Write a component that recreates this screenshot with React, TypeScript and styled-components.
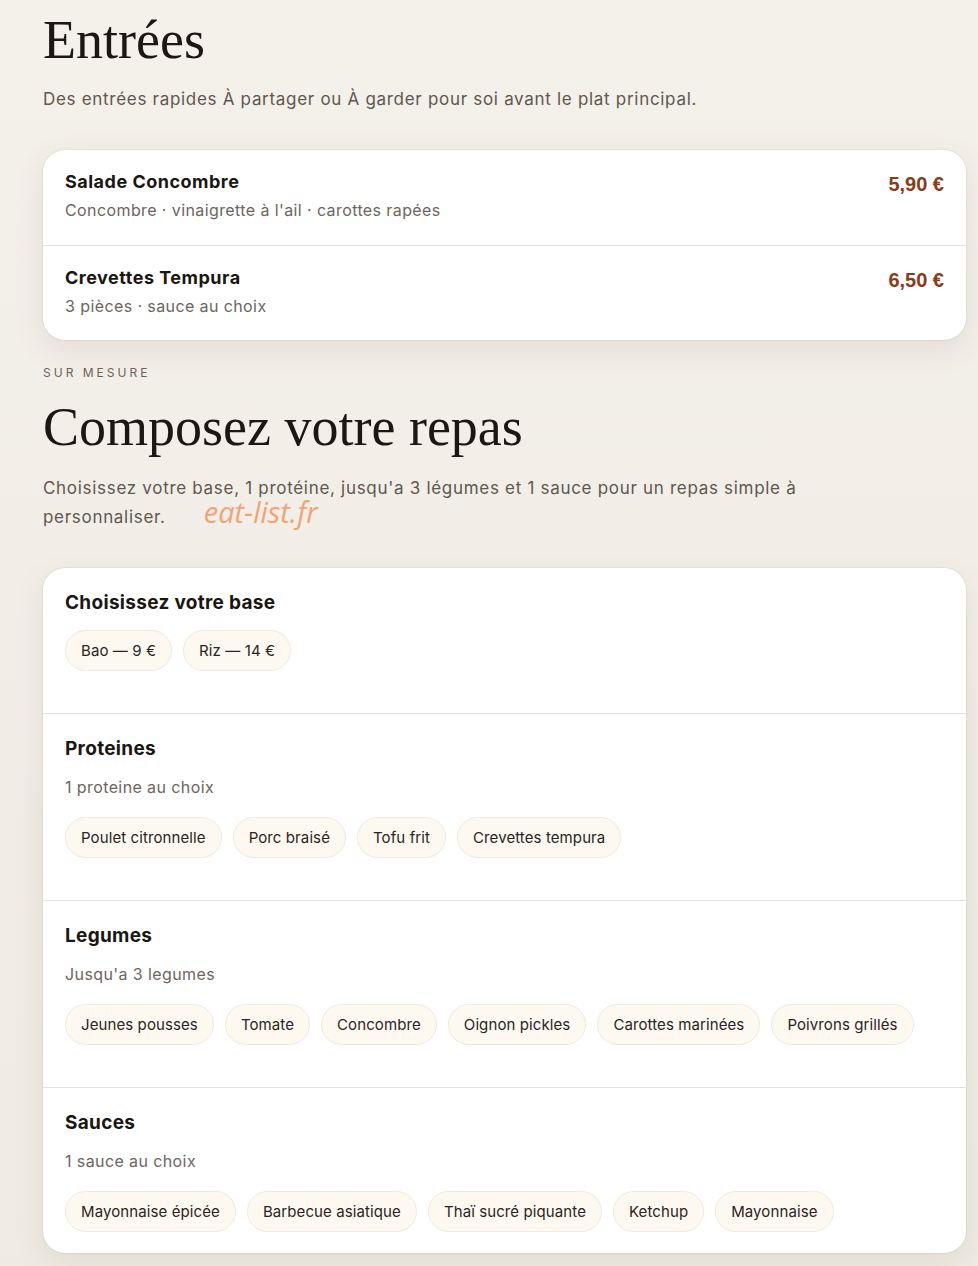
import styled, { createGlobalStyle } from 'styled-components';

const GlobalStyle = createGlobalStyle`
  html, body {
    margin: 0;
    padding: 0;
    background: linear-gradient(180deg, #f4f0ea 0%, #efebe4 100%);
    min-height: 100%;
  }
  body {
    font-family: Inter, "Noto Sans", sans-serif;
    color: #1c1814;
  }
  * { box-sizing: border-box; }
`;

const Page = styled.main`
  width: 923px;
  margin-left: 43px;
  padding-bottom: 40px;
`;

const Title = styled.h1`
  font-family: "Liberation Serif", "DejaVu Serif", serif;
  font-weight: 400;
  font-size: 54px;
  line-height: 1;
  color: #1c1712;
  margin: 0;
`;

const Lead = styled.p`
  font-size: 17px;
  line-height: 29px;
  letter-spacing: 0.7px;
  color: #5f5750;
  margin: 0;
  max-width: 775px;
`;

const Watermark = styled.span`
  font-family: "Open Sans", sans-serif;
  font-style: italic;
  font-size: 29px;
  line-height: 0;
  letter-spacing: 0;
  color: #f2a477;
  margin-left: 38px;
`;

const Card = styled.section`
  background: #fff;
  border-radius: 22px;
  box-shadow: 0 10px 30px rgba(120, 100, 70, 0.12), 0 0 0 1px rgba(120, 100, 70, 0.08);
  overflow: hidden;
`;

const DishRow = styled.div`
  display: flex;
  justify-content: space-between;
  align-items: flex-start;
  padding: 21px 22px 0;
  height: 95px;
  & + & { border-top: 1px solid #e6e1da; }
`;

const DishName = styled.h3`
  margin: 0;
  font-size: 18px;
  font-weight: 700;
  letter-spacing: 0.5px;
  color: #1b1611;
`;

const DishDesc = styled.div`
  font-size: 16px;
  letter-spacing: 0.4px;
  color: #6d655d;
  margin-top: 8px;
`;

const Price = styled.span`
  font-family: "Liberation Sans", Arial, sans-serif;
  font-weight: 700;
  font-size: 20px;
  color: #8a3b17;
  margin-top: 2px;
`;

const Eyebrow = styled.div`
  font-size: 12px;
  letter-spacing: 3px;
  color: #6b6259;
  text-transform: uppercase;
`;

const Section = styled.div`
  padding: 23px 22px 42px;
  & + & { border-top: 1px solid #e6e1da; }
  &:last-child { padding-bottom: 21px; }
`;

const SectionTitle = styled.h3`
  margin: 0;
  font-size: 19px;
  font-weight: 700;
  letter-spacing: 0.3px;
  color: #1b1611;
`;

const Hint = styled.div`
  font-size: 16px;
  letter-spacing: 0.4px;
  color: #6d655d;
  margin-top: 17px;
  padding-bottom: 4px;
`;

const Chips = styled.div`
  display: flex;
  flex-wrap: wrap;
  gap: 11px;
  margin-top: 16px;
`;

const Chip = styled.button`
  height: 41px;
  padding: 0 15px;
  border-radius: 999px;
  border: 1px solid #efe9df;
  background: #fdf9f1;
  font-family: inherit;
  font-size: 15px;
  letter-spacing: 0.1px;
  color: #2a241f;
  cursor: pointer;
`;

const entrees = [
  { name: 'Salade Concombre', desc: "Concombre · vinaigrette à l'ail · carottes rapées", price: '5,90 €' },
  { name: 'Crevettes Tempura', desc: '3 pièces · sauce au choix', price: '6,50 €' },
];

const steps = [
  { title: 'Choisissez votre base', items: ['Bao — 9 €', 'Riz — 14 €'] },
  { title: 'Proteines', hint: '1 proteine au choix', items: ['Poulet citronnelle', 'Porc braisé', 'Tofu frit', 'Crevettes tempura'] },
  { title: 'Legumes', hint: "Jusqu'a 3 legumes", items: ['Jeunes pousses', 'Tomate', 'Concombre', 'Oignon pickles', 'Carottes marinées', 'Poivrons grillés'] },
  { title: 'Sauces', hint: '1 sauce au choix', items: ['Mayonnaise épicée', 'Barbecue asiatique', 'Thaï sucré piquante', 'Ketchup', 'Mayonnaise'] },
];

export default function App() {
  return (
    <>
      <GlobalStyle />
      <Page>
        <Title style={{ paddingTop: 13 }}>Entrées</Title>
        <Lead style={{ marginTop: 18 }}>Des entrées rapides À partager ou À garder pour soi avant le plat principal.</Lead>
        <Card style={{ marginTop: 36 }}>
          {entrees.map(e => (
            <DishRow key={e.name}>
              <div>
                <DishName>{e.name}</DishName>
                <DishDesc>{e.desc}</DishDesc>
              </div>
              <Price>{e.price}</Price>
            </DishRow>
          ))}
        </Card>
        <Eyebrow style={{ marginTop: 25 }}>Sur mesure</Eyebrow>
        <Title style={{ marginTop: 20 }}>Composez votre repas</Title>
        <Lead style={{ marginTop: 20 }}>
          Choisissez votre base, 1 protéine, jusqu'a 3 légumes et 1 sauce pour un repas simple à personnaliser.
          <Watermark>eat-list.fr</Watermark>
        </Lead>
        <Card style={{ marginTop: 36 }}>
          {steps.map(s => (
            <Section key={s.title}>
              <SectionTitle>{s.title}</SectionTitle>
              {s.hint && <Hint>{s.hint}</Hint>}
              <Chips>
                {s.items.map(i => <Chip key={i}>{i}</Chip>)}
              </Chips>
            </Section>
          ))}
        </Card>
      </Page>
    </>
  );
}
